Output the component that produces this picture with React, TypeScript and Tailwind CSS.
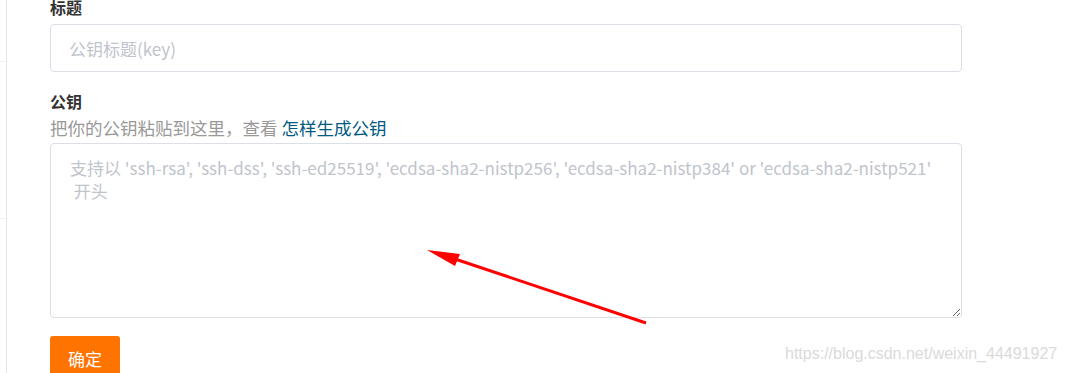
import React from "react";

export default function App() {
  const font = { fontFamily: '"Noto Sans CJK SC", "Noto Sans", sans-serif' };
  return (
    <div className="relative w-[1066px] h-[373px] overflow-hidden bg-white" style={font}>
      <div className="flex h-full">
        <div className="w-[7px] shrink-0 border-r border-[#e4e7ed] flex flex-col">
          <div className="h-[62px] shrink-0 border-b border-[#eef0f3]" />
          <div className="h-[157px] shrink-0 border-b border-[#eef0f3]" />
        </div>
        <div className="pl-[43px] w-[955px] flex flex-col">
          <div className="mt-[-3px] shrink-0 text-[16px] leading-[20px] font-bold text-[#333]">标题</div>
          <input
            className="mt-[7px] h-[48px] w-[912px] shrink-0 rounded-[4px] border border-[#dcdfe6] px-[18px] text-[17px] outline-none placeholder:text-[#c0c4cc]"
            placeholder="公钥标题(key)"
            style={font}
          />
          <div className="mt-[19px] shrink-0 text-[16px] leading-[20px] font-bold text-[#333]">公钥</div>
          <div className="mt-[6px] shrink-0 text-[17.5px] leading-[22px] text-[#999]">
            把你的公钥粘贴到这里，查看 <span className="text-[#005980]">怎样生成公钥</span>
          </div>
          <textarea
            className="mt-[4px] h-[175px] w-[912px] shrink-0 rounded-[4px] border border-[#dcdfe6] px-[19px] py-[12px] text-[17px] leading-[23px] outline-none placeholder:text-[#c0c4cc]"
            placeholder={"支持以 'ssh-rsa', 'ssh-dss', 'ssh-ed25519', 'ecdsa-sha2-nistp256', 'ecdsa-sha2-nistp384' or 'ecdsa-sha2-nistp521'\n 开头"}
            style={font}
          />
          <button className="mt-[18px] h-[40px] w-[70px] shrink-0 rounded-[3px] bg-[#ff7300] pt-[6px] text-[17px] text-white">
            确定
          </button>
        </div>
      </div>
      <div
        className="absolute left-[785px] top-[342px] text-[16px] text-[#dadada]"
        style={{ fontFamily: '"Liberation Sans", Arial, sans-serif' }}
      >
        https://blog.csdn.net/weixin_44491927
      </div>
      <svg className="absolute left-0 top-0" width="1066" height="373" viewBox="0 0 1066 373">
        <line x1="646" y1="323" x2="452" y2="258" stroke="#ff0000" strokeWidth="3" />
        <polygon points="427,250 460,254 455,266" fill="#ff0000" />
      </svg>
    </div>
  );
}
